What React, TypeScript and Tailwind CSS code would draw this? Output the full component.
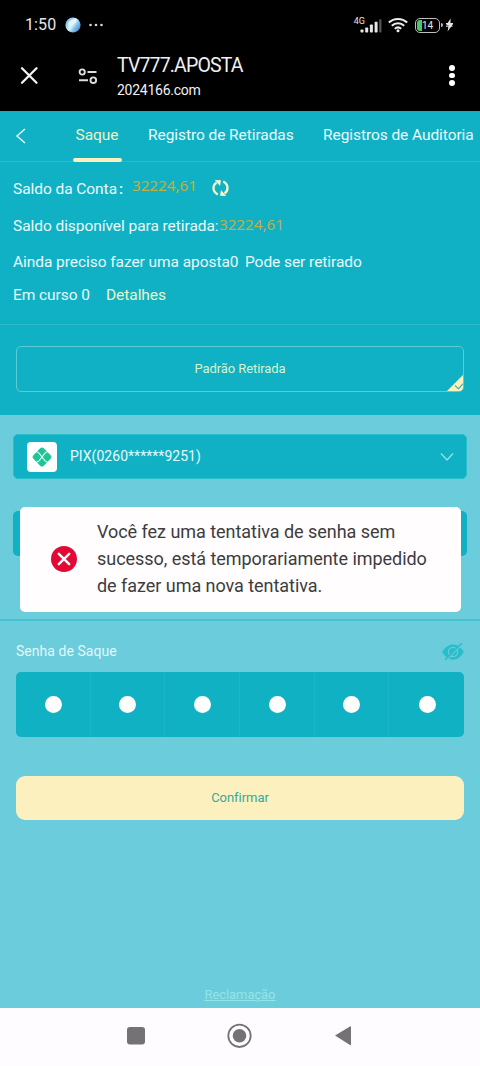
import type { ReactNode } from "react";

function StatusBar() {
  return (
    <div className="flex h-[50px] items-center bg-black pl-[25px] pr-[26px] text-[#e6e6e6]">
      <span className="w-[32px] whitespace-nowrap text-[16px] leading-5 tracking-[0.1px]">1:50</span>
      <svg className="ml-[8px]" width="16" height="16" viewBox="0 0 16 16">
        <defs>
          <linearGradient id="globe" x1="0" y1="0.2" x2="1" y2="0.9">
            <stop offset="0" stopColor="#69b4e6" />
            <stop offset="0.45" stopColor="#d8f3fa" />
            <stop offset="0.62" stopColor="#8bc8ee" />
            <stop offset="1" stopColor="#2f78c4" />
          </linearGradient>
        </defs>
        <circle cx="8" cy="8" r="7.6" fill="url(#globe)" />
        <path d="M3 6.500C5 2.500 9 1.600 12 2.800C10.500 6.500 7 8.500 4 10Z" fill="#e9fafd" opacity="0.8" />
      </svg>
      <svg className="ml-[7px]" width="16" height="16" viewBox="0 0 16 16" fill="#d8d8d8">
        <circle cx="2.500" cy="8" r="1.300" />
        <circle cx="8" cy="8" r="1.300" />
        <circle cx="13.500" cy="8" r="1.300" />
      </svg>
      <div className="ml-auto flex items-center">
        <span className="-mr-[5px] mb-[8px] whitespace-nowrap text-[9px] leading-[8px]">4G</span>
        <svg className="mt-px" width="22" height="16" viewBox="0 0 22 16">
          <g fill="#e6e6e6">
            <rect x="0.500" y="11.500" width="3" height="3" rx="0.800" />
            <rect x="5.200" y="9.500" width="3" height="5" rx="0.800" />
            <rect x="9.900" y="6.500" width="3" height="8" rx="0.800" />
            <rect x="14.600" y="3.800" width="3" height="10.700" rx="0.800" />
          </g>
          <rect x="19.200" y="1.200" width="2.300" height="13.300" rx="0.800" fill="#555" />
        </svg>
        <svg className="ml-[6px]" width="20" height="16" viewBox="0 0 20 16" fill="none" stroke="#ededed" strokeWidth="2">
          <path d="M0.800 5.500C6 0.700 14 0.700 19.200 5.500" />
          <path d="M3.800 8.800C7.300 5.500 12.700 5.500 16.200 8.800" />
          <path d="M6.800 11.800C8.700 10.100 11.300 10.100 13.200 11.800" />
          <circle cx="10" cy="13.800" r="1.500" fill="#ededed" stroke="none" />
        </svg>
        <div className="relative ml-[7px] flex h-[15px] w-[25px] items-center justify-center overflow-hidden rounded-[5px] border border-[#bdbdbd]">
          <span className="absolute left-[1px] top-[1px] h-[11px] w-[5px] rounded-l-[3px] bg-[#4ac767]" />
          <span className="relative pt-px text-[10px] leading-none">14</span>
        </div>
        <span className="ml-px h-[4px] w-[2px] rounded-r bg-[#bdbdbd]" />
        <svg className="ml-[2px]" width="9" height="14" viewBox="0 0 9 14" fill="#e6e6e6">
          <path d="M5.800 0.500L1 7.200H3.600L2.600 13.500L8.200 5.800H5.300Z" />
          <path d="M1 5.500H8M1 8.200H7.500" stroke="#e6e6e6" strokeWidth="1" />
        </svg>
      </div>
    </div>
  );
}

function BrowserBar() {
  return (
    <div className="flex h-[61px] items-center bg-black pl-[20px] pr-[24px] text-[#f0f0f0]">
      <svg className="mt-[-11px]" width="19" height="19" viewBox="0 0 19 19" stroke="#f2f2f2" strokeWidth="2.300" strokeLinecap="round">
        <path d="M2 2.200L16.500 16.700M16.500 2.200L2 16.700" />
      </svg>
      <svg className="ml-[39px] mt-[-10px]" width="20" height="18" viewBox="0 0 20 18" fill="none" stroke="#dedede" strokeWidth="1.900">
        <circle cx="4.200" cy="5" r="2.600" />
        <path d="M9.500 5H18.500M1 13.200H10" />
        <circle cx="15.300" cy="13.200" r="2.800" />
      </svg>
      <div className="ml-[19px] mt-[-7px] flex flex-col whitespace-nowrap">
        <span className="text-[19.500px] leading-[26px] tracking-[-0.850px]">TV777.APOSTA</span>
        <span className="text-[14px] leading-[23px] tracking-[-0.250px]">2024166.com</span>
      </div>
      <div className="ml-auto mt-[-10px] flex w-[8px] flex-col items-center gap-[2px]">
        <span className="size-[5.500px] rounded-full bg-white" />
        <span className="size-[5.500px] rounded-full bg-white" />
        <span className="size-[5.500px] rounded-full bg-white" />
      </div>
    </div>
  );
}

function Tabs() {
  return (
    <nav className="flex h-[51px] border-b border-[#2abbca] text-[15.500px] leading-[48px] tracking-[-0.070px] text-[#eafbfc]">
      <svg className="ml-[15px] mt-[17px] shrink-0" width="12" height="16" viewBox="0 0 12 16" fill="none" stroke="#d9f5f7" strokeWidth="1.600">
        <path d="M10 1L2 8L10 15" />
      </svg>
      <div className="ml-[46px] flex h-[51px] w-[48px] shrink-0 flex-col items-center">
        <span className="h-[47px] whitespace-nowrap text-[#f0f3c0]">Saque</span>
        <span className="h-[4px] w-[49px] rounded-full bg-[#fbf2bd]" />
      </div>
      <span className="ml-[27px] w-[146px] shrink-0 whitespace-nowrap">Registro de Retiradas</span>
      <span className="ml-[29px] w-[152px] shrink-0 whitespace-nowrap">Registros de Auditoria</span>
    </nav>
  );
}

function Row({ h, children }: { h: string; children: ReactNode }) {
  return <div className={`flex items-center whitespace-nowrap ${h}`}>{children}</div>;
}

function Amount() {
  return <span className="font-['Noto_Sans',sans-serif] text-[15.200px] tracking-normal text-[#c3ad3f]">32224,61</span>;
}

function Balance() {
  return (
    <section className="flex h-[163px] flex-col border-b border-[#2abbca] pl-[13px] pt-[9px] text-[15.500px] tracking-[-0.060px] text-[#eafbfc]">
      <Row h="h-[37px]">
        <span className="w-[110px]">Saldo da Conta<span className="pl-[2px] font-medium">:</span></span>
        <span className="mb-[6px] ml-[9px] w-[66px]"><Amount /></span>
        <svg className="mb-[3px] ml-[14px]" width="17" height="18" viewBox="0 0 17 18" fill="none" stroke="#f7f6c8" strokeWidth="2.300">
          <path d="M5.800 15.500C0.300 12.500 0.300 6.500 4.500 3.500" />
          <path d="M11.200 2.500C16.700 5.500 16.700 11.500 12.500 14.500" />
          <path d="M2.800 1L9 1.200L8 7Z M14.200 17L8 16.800L9 11Z" fill="#f7f6c8" stroke="none" />
        </svg>
      </Row>
      <Row h="h-[37px]">
        <span className="w-[206px]">Saldo disponível para retirada:</span>
        <span className="mb-[3px]"><Amount /></span>
      </Row>
      <Row h="h-[35px]">
        <span className="w-[232px]">Ainda preciso fazer uma aposta0</span>
        <span>Pode ser retirado</span>
      </Row>
      <Row h="h-[32px]">
        <span className="w-[93px]">Em curso 0</span>
        <span className="text-[#eef5c6]">Detalhes</span>
      </Row>
    </section>
  );
}

function Mode() {
  return (
    <section className="h-[90px] px-[16px] pt-[21px]">
      <div className="relative flex h-[46px] items-center justify-center overflow-hidden rounded-[5px] border border-[#5ccdd6] text-[13px] tracking-[-0.080px] text-[#d5f3cb]">
        <span className="whitespace-nowrap">Padrão Retirada</span>
        <svg className="absolute -bottom-px -right-px" width="18" height="18" viewBox="0 0 18 18">
          <path d="M18 0V18H0Z" fill="#fcf0bd" />
          <path d="M9 11.500L12.500 14.800L17 9.800" fill="none" stroke="#58b9ae" strokeWidth="1.300" />
        </svg>
      </div>
    </section>
  );
}

function PixLogo() {
  return (
    <span className="flex size-[30px] items-center justify-center rounded-[4px] bg-white">
      <svg width="22" height="22" viewBox="0 0 22 22">
        <rect x="3.600" y="3.600" width="14.800" height="14.800" rx="2.600" transform="rotate(45 11 11)" fill="#1fc598" />
        <path d="M5 5.800C6.500 5.800 7.200 6.300 8 7.100L14 14.900C14.800 15.700 15.500 16.200 17 16.200M17 5.800C15.500 5.800 14.800 6.300 14 7.100L8 14.900C7.200 15.700 6.500 16.200 5 16.200" fill="none" stroke="#e2faf2" strokeWidth="1.100" />
      </svg>
    </span>
  );
}

function Toast() {
  return (
    <div role="alert" className="absolute left-[20px] top-[507px] flex h-[105px] w-[441px] items-center rounded-[5px] bg-[#fffdfe] pl-[31px]">
      <svg className="mb-px" width="26" height="26" viewBox="0 0 26 26">
        <circle cx="13" cy="13" r="13" fill="#e20a35" />
        <path d="M7.800 7.800L18.200 18.200M18.200 7.800L7.800 18.200" stroke="#fff" strokeWidth="2.400" strokeLinecap="round" />
      </svg>
      <p className="mb-[2px] ml-[20px] whitespace-nowrap text-[18px] leading-[27px] tracking-[-0.040px] text-[#3c3c3e]">
        Você fez uma tentativa de senha sem<br />
        sucesso, está temporariamente impedido<br />
        de fazer uma nova tentativa.
      </p>
    </div>
  );
}

const digits = [0, 1, 2, 3, 4, 5];

function WithdrawForm() {
  return (
    <section className="flex h-[593px] flex-col bg-[#6bccdc]">
      <div className="mx-[13px] mt-[19px] flex h-[45px] items-center rounded-[5px] border border-[#29bdc9] bg-[#10b1c5] pl-[13px] pr-[11px]">
        <PixLogo />
        <span className="ml-[13px] whitespace-nowrap text-[14px] tracking-[0.030px] text-[#e6fafb]">PIX(0260******9251)</span>
        <svg className="ml-auto" width="16" height="10" viewBox="0 0 16 10" fill="none" stroke="#8be3e9" strokeWidth="1.400">
          <path d="M2 1.500L8 8L14 1.500" />
        </svg>
      </div>
      <div className="mx-[13px] mt-[32px] h-[45px] rounded-[5px] bg-[#10b1c5]" />
      <div className="mt-[63px] h-[2px] bg-[#45c1cf]" />
      <div className="flex h-[51px] items-center justify-between pl-[16px] pr-[16px] pt-[10px]">
        <span className="whitespace-nowrap text-[14px] tracking-[0.040px] text-[#e2f8fa]">Senha de Saque</span>
        <svg width="22" height="20" viewBox="0 0 22 20">
          <path d="M0.200 10C3 5 7 2.500 11 2.500S19 5 21.800 10C19 15 15 17.500 11 17.500S3 15 0.200 10Z" fill="#27bec9" />
          <circle cx="11" cy="10" r="4.600" fill="none" stroke="#6bccdc" strokeWidth="1.200" />
          <path d="M4.200 18.200L20.500 2" stroke="#6bccdc" strokeWidth="1.300" />
          <path d="M3 18L19.800 1.200" stroke="#27bec9" strokeWidth="1.400" />
        </svg>
      </div>
      <div className="mx-[16px] grid h-[65px] grid-cols-6 rounded-[5px] bg-[#10b1c2]">
        {digits.map((d) => (
          <div key={d} className="flex items-center justify-center border-r border-[#1cb6c6] pl-px last:border-r-0">
            <span className="size-[17px] rounded-full bg-white" />
          </div>
        ))}
      </div>
      <button className="mx-[16px] mt-[39px] h-[44px] rounded-[9px] bg-[#fcf0be] text-[13px] tracking-[-0.050px] text-[#35a99c]">
        Confirmar
      </button>
      <a className="mb-[3px] mt-auto self-center whitespace-nowrap text-[13px] leading-[20px] tracking-[-0.080px] text-[#94e4e7] underline">Reclamação</a>
    </section>
  );
}

function NavigationBar() {
  return (
    <footer className="flex h-[58px] items-start justify-center bg-[#fefcff] pt-[15px]">
      <svg width="230" height="26" viewBox="0 0 230 26" fill="#747274">
        <rect x="2" y="4" width="18" height="17.500" rx="3" />
        <circle cx="114.500" cy="12.800" r="11.200" fill="none" stroke="#747274" strokeWidth="1.800" />
        <circle cx="114.500" cy="12.800" r="6.800" />
        <path d="M210 12.600L225 3.500Q226 3 226 4V21.500Q226 22.500 225 22Z" />
      </svg>
    </footer>
  );
}

export default function App() {
  return (
    <main className="relative h-[1066px] w-[480px] overflow-hidden bg-[#10b1c5] font-[Roboto,sans-serif]">
      <StatusBar />
      <BrowserBar />
      <Tabs />
      <Balance />
      <Mode />
      <WithdrawForm />
      <NavigationBar />
      <Toast />
    </main>
  );
}
